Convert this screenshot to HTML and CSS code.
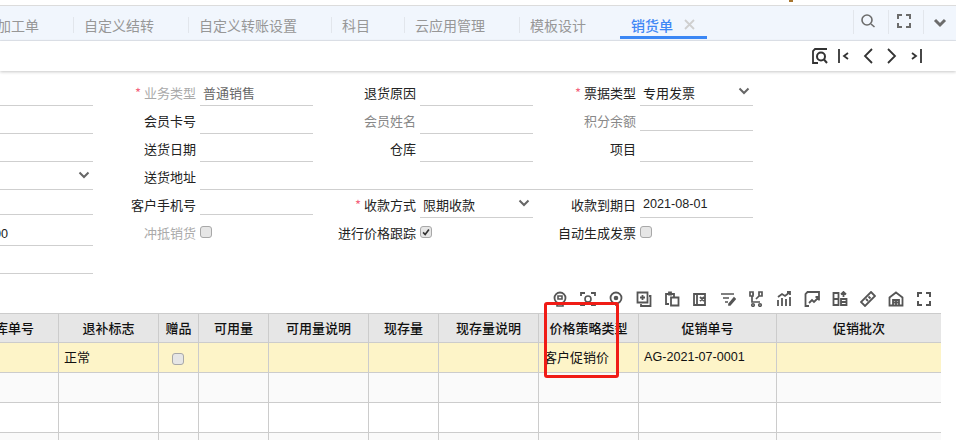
FILE: index.html
```html
<!DOCTYPE html>
<html lang="zh">
<head>
<meta charset="utf-8">
<title>销货单</title>
<link rel="stylesheet" href="styles.css">
</head>
<body>
<div class="page">
  <i class="speck"></i>
  <header class="tabbar">
    <nav class="tabs">
      <span class="tab tab-first">加工单</span>
      <span class="tab">自定义结转</span>
      <span class="tab">自定义转账设置</span>
      <span class="tab">科目</span>
      <span class="tab">云应用管理</span>
      <span class="tab">模板设计</span>
      <span class="tab tab-active">销货单<svg class="close" viewBox="0 0 11 11"><path d="M1 1l9 9M10 1l-9 9"/></svg></span>
    </nav>
    <div class="tabtools">
      <span class="tabtool tool-search"><svg class="ic" viewBox="0 0 16 16"><circle cx="7" cy="7" r="5"/><path d="M11 11l3.500 3" /></svg></span>
      <span class="tabtool tool-full"><svg class="ic" viewBox="0 0 16 16"><path d="M2 6V2h4M10 2h4v4M14 10v4h-4M6 14H2v-4" stroke-width="2"/></svg></span>
      <span class="tabtool tool-more"><svg class="ic" viewBox="0 0 16 16"><path d="M3 5l5 5 5-5" stroke-width="3"/></svg></span>
    </div>
  </header>
  <div class="navbar">
    <svg class="ic dark" viewBox="0 0 16 16"><path d="M15 1H3L1 3v12h5" stroke-width="1.800"/><circle cx="9" cy="8.500" r="4" stroke-width="2"/><path d="M12 11.500l3 3.500" stroke-width="2"/></svg>
    <svg class="ic dark" viewBox="0 0 16 16"><path d="M3 1v14M12 5l-4 3 4 3" stroke-width="1.800"/></svg>
    <svg class="ic dark" viewBox="0 0 16 16"><path d="M12 1L5 8l7 7" stroke-width="1.800"/></svg>
    <svg class="ic dark" viewBox="0 0 16 16"><path d="M4 1l7 7-7 7" stroke-width="1.800"/></svg>
    <svg class="ic dark" viewBox="0 0 16 16"><path d="M13 1v14M4 5l4 3-4 3" stroke-width="1.800"/></svg>
  </div>

  <form class="form">
    <div class="field col1"><span class="value"></span></div>
    <div class="field"><label class="label muted"><b>*</b>业务类型</label><span class="value grey cjk">普通销售</span></div>
    <div class="field"><label class="label">退货原因</label><span class="value"></span></div>
    <div class="field"><label class="label"><b>*</b>票据类型</label><span class="value cjk">专用发票<svg class="chev" viewBox="0 0 12 8"><path d="M1.500 1.500L6 6l4.500-4.500"/></svg></span></div>

    <div class="field col1"><span class="value"></span></div>
    <div class="field"><label class="label">会员卡号</label><span class="value"></span></div>
    <div class="field"><label class="label muted-dark">会员姓名</label><span class="value"></span></div>
    <div class="field short"><label class="label muted-dark">积分余额</label><span class="value"></span></div>

    <div class="field col1"><span class="value"></span></div>
    <div class="field"><label class="label">送货日期</label><span class="value"></span></div>
    <div class="field"><label class="label">仓库</label><span class="value"></span></div>
    <div class="field"><label class="label">项目</label><span class="value"></span></div>

    <div class="field col1"><span class="value"><svg class="chev" viewBox="0 0 12 8"><path d="M1.500 1.500L6 6l4.500-4.500"/></svg></span></div>
    <div class="field wide"><label class="label">送货地址</label><span class="value"></span></div>

    <div class="field col1 short"><span class="value"></span></div>
    <div class="field short"><label class="label">客户手机号</label><span class="value"></span></div>
    <div class="field"><label class="label"><b>*</b>收款方式</label><span class="value cjk">限期收款<svg class="chev" viewBox="0 0 12 8"><path d="M1.500 1.500L6 6l4.500-4.500"/></svg></span></div>
    <div class="field"><label class="label">收款到期日</label><span class="value latin">2021-08-01</span></div>

    <div class="field col1"><span class="value cut latin">00</span></div>
    <div class="field"><label class="label muted">冲抵销货</label><span class="check"></span></div>
    <div class="field"><label class="label">进行价格跟踪</label><span class="check"><svg viewBox="0 0 12 12"><path d="M2.500 6.500l2.500 2.500 4.500-6"/></svg></span></div>
    <div class="field"><label class="label">自动生成发票</label><span class="check"></span></div>

    <div class="field col1"><span class="value"></span></div>
  </form>

  <div class="gridtools">
    <svg class="ic" viewBox="0 0 16 16"><circle cx="8" cy="7" r="5.500" stroke-width="1.800"/><path d="M6 5h4v3H6zM5 13v2h6v-2" stroke-width="1.600"/></svg>
    <svg class="ic" viewBox="0 0 16 16"><path d="M1 5V2h4M11 2h4v3M15 11v3h-4M5 14H1v-3" stroke-width="1.800"/><circle cx="8" cy="8" r="3"/></svg>
    <svg class="ic" viewBox="0 0 16 16"><circle cx="8" cy="7" r="5.500" stroke-width="1.800"/><circle cx="8" cy="7" r="1.500" fill="#555"/><path d="M8 13v2"/></svg>
    <svg class="ic" viewBox="0 0 16 16"><path d="M1.500 1.500h10v10h-10zM5 13v2h9.500V5H13M6.500 4v5M4 6.500h5" stroke-width="1.800"/></svg>
    <svg class="ic" viewBox="0 0 16 16"><path d="M5 13H2V3h8v3M7 1.500h-2v2h2zM7 6.500h7.500v8H7z" stroke-width="1.800"/></svg>
    <svg class="ic" viewBox="0 0 16 16"><path d="M2 3h11v11H2zM8 6l4 4M12 6l-4 4M5 3v11" stroke-width="1.800"/></svg>
    <svg class="ic" viewBox="0 0 16 16"><path d="M1 3h13M3 7h6M5 11h3M9 13l5-6 1 1-5 6h-1z" stroke-width="1.700"/></svg>
    <svg class="ic" viewBox="0 0 16 16"><path d="M2 1h3v4H2zM11 1h3v4h-3zM5 3h1M4 5v6h8M8 8l3-3" stroke-width="1.700"/><circle cx="5" cy="14" r="1.300"/><circle cx="12" cy="14" r="1.300"/></svg>
    <svg class="ic" viewBox="0 0 16 16"><path d="M2 15V9M6 15V7M10 15V8M14 15V6M2 6l4-3 3 2 5-4M11 1h3v3" stroke-width="1.800"/></svg>
    <svg class="ic" viewBox="0 0 16 16"><path d="M5 15H1.500V3L3.500 1H15v7M5 12l3-3 2 2 5-5M11.500 6H15v3.500" stroke-width="1.800"/></svg>
    <svg class="ic" viewBox="0 0 16 16"><path d="M1.500 2h5v12h-5zM1.500 8h5M9 8h5.500v6H9zM9 11h5.500M11.500 6V1M9 3.500L11.500 1 14 3.500" stroke-width="1.800"/></svg>
    <svg class="ic" viewBox="0 0 16 16"><path d="M11 1l4 4-10 10-4-4zM6 8l2 2M8.500 5.500l2 2" stroke-width="1.800"/></svg>
    <svg class="ic" viewBox="0 0 16 16"><path d="M8 1.500l6.500 5V14.500h-13v-8zM5 9h6v5.500H5zM8 9v5.500M5 11.500h6" stroke-width="1.800"/></svg>
    <svg class="ic" viewBox="0 0 16 16"><path d="M2 6V2h4M10 2h4v4M14 10v4h-4M6 14H2v-4" stroke-width="2"/></svg>
  </div>

  <div class="gridwrap">
    <table class="grid">
      <colgroup>
        <col class="w101"><col class="w100"><col class="w40"><col class="w70"><col class="w100"><col class="w70"><col class="w100"><col class="w100"><col class="w138"><col class="w164">
      </colgroup>
      <thead>
        <tr><th>出库单号</th><th>退补标志</th><th>赠品</th><th>可用量</th><th>可用量说明</th><th>现存量</th><th>现存量说明</th><th>价格策略类型</th><th>促销单号</th><th>促销批次</th></tr>
      </thead>
      <tbody>
        <tr class="selected"><td></td><td>正常</td><td class="center"><span class="check"></span></td><td></td><td></td><td></td><td></td><td>客户促销价</td><td class="latin">AG-2021-07-0001</td><td></td></tr>
        <tr class="odd"><td></td><td></td><td></td><td></td><td></td><td></td><td></td><td></td><td></td><td></td></tr>
        <tr><td></td><td></td><td></td><td></td><td></td><td></td><td></td><td></td><td></td><td></td></tr>
        <tr class="odd"><td></td><td></td><td></td><td></td><td></td><td></td><td></td><td></td><td></td><td></td></tr>
      </tbody>
    </table>
  </div>

  <div class="callout"></div>
</div>
</body>
</html>
```

FILE: styles.css
```css
* { box-sizing: border-box; }
html, body { margin: 0; padding: 0; background: #fff; }
body {
  font-family: "Noto Sans CJK SC", "Liberation Sans", sans-serif;
  font-size: 13px;
  color: #222;
  overflow: hidden;
}
.page { position: relative; width: 956px; height: 440px; overflow: hidden; padding-top: 5px; }
.speck { position: absolute; left: 789px; top: 0; width: 4px; height: 2px; background: #a9762f; }

/* tab bar */
.tabbar {
  display: flex;
  justify-content: space-between;
  height: 36px;
  background: #f1f6fd;
  border-top: 1px solid #dcdcdc;
  border-bottom: 1px solid #e2e7ee;
}
.tabs { display: flex; align-items: flex-start; padding-top: 11px; overflow: hidden; }
.tab {
  display: flex;
  align-items: center;
  flex: none;
  height: 16px;
  padding: 0 34px 1px 10px;
  font-size: 14px;
  line-height: 16px;
  color: #979797;
  white-space: nowrap;
  border-left: 1px solid #e2e6ec;
}
.tab-first { width: 73px; padding-left: 0; border-left: 0; text-indent: -3px; }
.tab-active {
  height: 22px;
  width: 87px;
  padding: 0 0 7px 11px;
  color: #3f87f5;
  font-weight: 500;
  border-left: 0;
  box-shadow: inset 0 -3px 0 #3b87f5;
}
.close { width: 11px; height: 11px; margin-left: 11px; fill: none; stroke: #cfcfcf; stroke-width: 1.800; }
.tabtools { display: flex; flex: none; width: 103px; padding-top: 4px; align-items: flex-start; }
.tabtool {
  display: flex;
  justify-content: center;
  width: 35px;
  height: 24px;
  padding-top: 3px;
  border-left: 1px solid #e2e6ec;
}
.tool-search { padding-right: 6px; }
.tool-full { padding-right: 4px; }
.tool-more { width: 33px; padding-top: 5px; }

.ic { width: 16px; height: 16px; flex: none; fill: none; stroke: #555; stroke-width: 1.600; }
.ic.dark { stroke: #333; }
.tabtool .ic { stroke: #6c6c6c; }

/* pager bar */
.navbar {
  display: flex;
  justify-content: flex-end;
  align-items: center;
  gap: 8px;
  height: 30px;
  padding: 0 32px 0 0;
  background: #fff;
  box-shadow: 0 1px 3px rgba(0, 0, 0, .22);
}

/* form */
.form {
  display: grid;
  grid-template-columns: 93px 220px 220px 220px;
  grid-auto-rows: 28px;
  margin-top: 7px;
}
.field { display: flex; align-items: stretch; min-width: 0; }
.field.wide { grid-column: 2 / 5; }
.field.short { height: 25px; }
.label {
  flex: none;
  width: 103px;
  margin-right: 4px;
  padding-top: 1px;
  text-align: right;
  line-height: 28px;
  white-space: nowrap;
  color: #222;
}
.label b { margin-right: 3px; font-weight: 400; color: #f4627c; }
.muted { color: #aaa; }
.muted-dark { color: #888; }
.value {
  position: relative;
  flex: 1;
  min-width: 0;
  padding-left: 3px;
  line-height: 29px;
  white-space: nowrap;
  font-family: "Liberation Sans", "Noto Sans CJK SC", sans-serif;
  border-bottom: 1px solid #cfcfcf;
}
.value.cjk { line-height: 32px; }
.value.grey { color: #666; }
.value.cut { text-indent: -6px; padding-left: 0; line-height: 33px; }
.latin { font-size: 12.600px; }
.chev {
  position: absolute;
  right: 3px;
  top: 9px;
  width: 12px;
  height: 8px;
  fill: none;
  stroke: #666;
  stroke-width: 2;
}
.check {
  display: inline-block;
  flex: none;
  width: 12px;
  height: 12px;
  margin-top: 8px;
  background: #e6e6e6;
  border: 1px solid #a8a8a8;
  border-radius: 3px;
}
.check svg { display: block; width: 10px; height: 10px; fill: none; stroke: #333; stroke-width: 2; }

/* grid toolbar */
.gridtools {
  display: flex;
  justify-content: flex-end;
  gap: 12px;
  height: 20px;
  margin-top: 12px;
  padding: 5px 24px 0 0;
}

/* table */
.gridwrap { width: 941px; margin-top: 7px; overflow: hidden; }
.grid {
  table-layout: fixed;
  width: 983px;
  margin-left: -42px;
  border-collapse: separate;
  border-spacing: 0;
  border-top: 1px solid #ccc;
}
.w101 { width: 101px; } .w100 { width: 100px; } .w40 { width: 40px; } .w70 { width: 70px; }
.w138 { width: 138px; } .w164 { width: 164px; }
.grid th, .grid td {
  height: 30px;
  padding: 0 0 2px 5px;
  border-right: 1px solid #ccc;
  border-bottom: 1px solid #ccc;
  white-space: nowrap;
  overflow: hidden;
  font-size: 13px;
  color: #111;
}
.grid th {
  height: 29px;
  padding: 0 0 2px;
  text-align: center;
  font-weight: 500;
  background: #e6e6e6;
}
.grid th:last-child, .grid td:last-child { border-right: 0; }
.grid td { font-family: "Liberation Sans", "Noto Sans CJK SC", sans-serif; }
.grid td.latin { font-size: 12.600px; }
.grid td.center { padding: 0 2px 0 0; text-align: center; }
.grid td.center .check { margin-top: 0; vertical-align: middle; }
.selected td { background: #fdf4c8; }
.odd td { background: #fafafa; }

/* annotation */
.callout {
  position: absolute;
  left: 544px;
  top: 302px;
  width: 75px;
  height: 76px;
  border: 3px solid #f01c16;
  border-radius: 3px;
}
```
